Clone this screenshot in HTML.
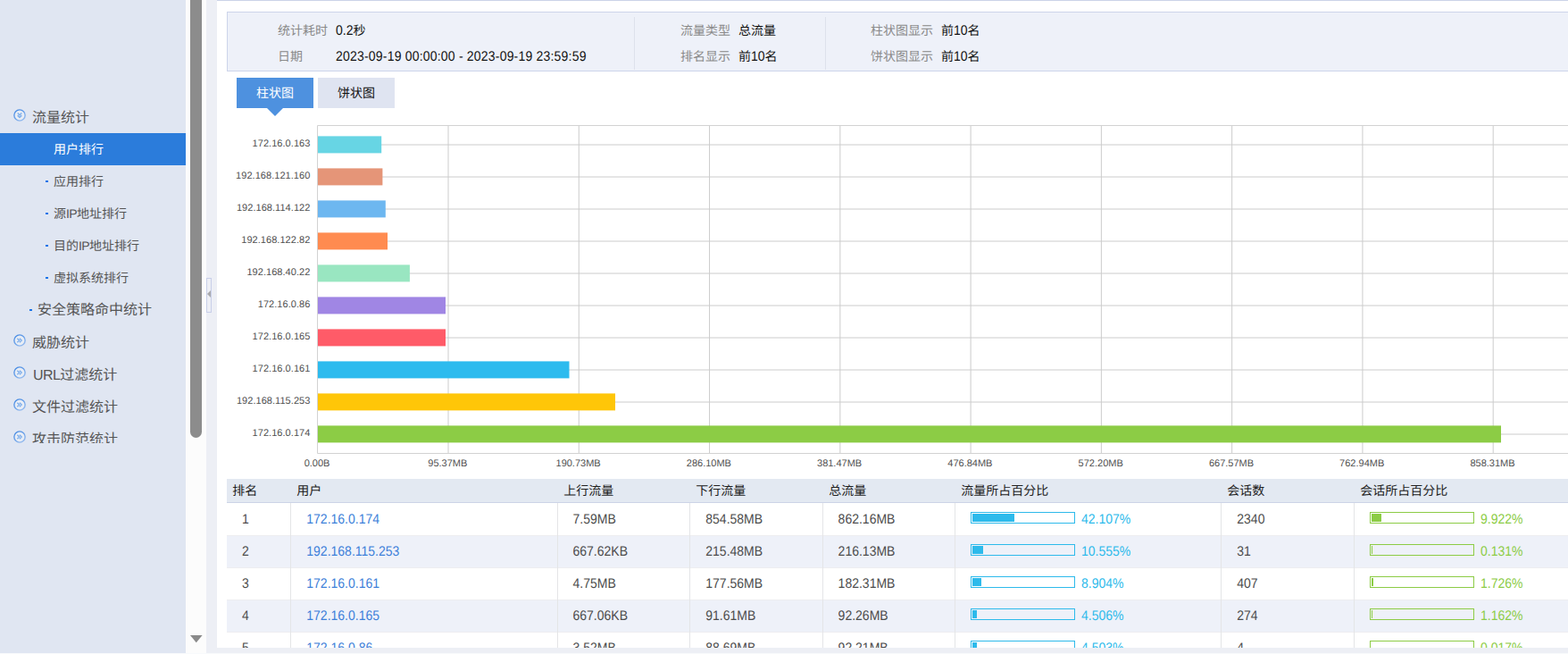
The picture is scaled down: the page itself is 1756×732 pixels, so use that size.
<!DOCTYPE html>
<html lang="zh-CN"><head><meta charset="utf-8"><title>流量统计 - 用户排行</title>
<style>
*{margin:0;padding:0;box-sizing:border-box}
html,body{width:1756px;height:732px;overflow:hidden;background:#fff}
body{position:relative;font-family:"Liberation Sans","Noto Sans CJK SC",sans-serif;font-size:14px;color:#444;text-rendering:geometricPrecision}
i{font-style:normal;display:block}

/* ---------- left menu ---------- */
#side{position:absolute;left:0;top:0;width:208px;height:731px;background:#e0e6f2}
#menu{position:absolute;left:0;top:0;width:208px;height:496px;overflow:hidden}
.mi{position:absolute;left:0;width:208px;height:36px;line-height:36px;color:#555;white-space:nowrap}
.mi .tx{position:absolute;top:1px}
.mi.top .tx{top:1.7px}
.mi.sub .tx{top:.4px}
.mi .l{letter-spacing:-0.6px}
.mi.top .l{margin-left:1px}
.mi.top .tx{left:36px;font-size:16px}
.mi.mid .tx{left:42px;font-size:16px}
.mi.sub .tx{left:60px;font-size:14px}
.mi .ic{position:absolute;left:15px;top:9px;fill:rgba(255,255,255,.28);stroke:url(#rg) #5c9ce8;stroke-width:1.4}
.mi .ic path{fill:none;stroke:#82b1ec;stroke-width:1.5;stroke-linejoin:round}
.mi .bl{position:absolute;top:17px;width:3px;height:2px;background:#1a73e8}
.mi.sub .bl{left:51px}
.mi.mid .bl{left:33px}
.mi.sel{background:#2b7cdb;color:#fff}

/* ---------- menu scrollbar ---------- */
#sb{position:absolute;left:208px;top:0;width:23px;height:731px;background:#fcfcfc;overflow:hidden}
#thumb{position:absolute;left:5px;top:-20px;width:13px;height:510px;border-radius:6.5px;background:#8c8c8c}
#dn{position:absolute;left:5px;top:711px;fill:#8a8a8a}

/* ---------- splitter ---------- */
#gut{position:absolute;left:231px;top:0;width:12px;height:731px;background:#edeff5}
#hd{position:absolute;left:0;top:311px;width:6px;height:39px;border:1px solid #c8cfe9}
#hd svg{position:absolute;left:0;top:13px;fill:#a9a9ad}

/* ---------- main ---------- */
#main{position:absolute;left:243px;top:0;width:1513px;height:725px;background:#fff;overflow:hidden;box-shadow:inset 0 1px 0 #cbd3e8}
#info{position:absolute;left:11px;top:13px;width:1510px;height:67px;background:#eef1f9;box-shadow:inset 1px 1px 0 #cdd4ea,inset 0 -1px 0 #cdd4ea}
#info>span{position:absolute;font-size:14px;line-height:20px;white-space:nowrap}
.il{color:#8a8a8a}
.iv{color:#111}
.date{letter-spacing:.2px}
.iv .l{display:inline-block;line-height:14px;transform:scaleY(1.1);transform-origin:0 83%}
.dv{position:absolute;top:6px;width:1px;height:59px;background:#dde1ec}

.tab{position:absolute;top:87px;width:86px;height:34px;line-height:34px;text-align:center;font-size:14px;white-space:nowrap}
.tab.on{left:22px;background:#4e91df;color:#fff}
.tab.off{left:113px;background:#dfe4f1;color:#111}
.tab.on i{position:absolute;left:34px;top:34px;width:0;height:0;border-left:9px solid transparent;border-right:9px solid transparent;border-top:9px solid #4e91df}

/* ---------- chart ---------- */
#chart{position:absolute;left:-243px;top:0;width:1756px;height:536px}
#grid{position:absolute;left:243px;top:130px}
.yl,.xl{position:absolute;font-size:11px;line-height:14px;color:#505050;white-space:nowrap}
.yl{left:242.4px;width:105px;text-align:right;letter-spacing:.05px}
.xl{top:512px;width:100px;text-align:center}

/* ---------- table ---------- */
#tbl{position:absolute;left:11px;top:536px;width:1502px;height:260px}
.th{position:absolute;left:0;top:0;width:100%;height:27px;background:#e3e9f2;border-bottom:1px solid #ccd4e7}
.hc{position:absolute;top:0;line-height:26px;font-size:14px;color:#222;white-space:nowrap}
.tr{position:absolute;left:0;width:100%;height:36px}
.tr.alt{background:#eef1f9}
.td,.pc{position:absolute;top:0;line-height:36px;font-size:14px;color:#4c4c4c;white-space:nowrap;transform:scaleY(1.1);transform-origin:0 22.6px}
.lk{color:#3d7fd9}
.pbar{position:absolute;top:10px;width:117px;height:13px;border:1px solid;padding:1px}
.pbar i{height:100%}
.pb{border-color:#2dbaeb;color:#2dbaeb}
.pg{border-color:#8ccc45;color:#8ccc45}
.pb i{background:#2dbaeb}
.pg i{background:#8ccc45}
.cd{position:absolute;top:27px;width:1px;height:233px;background:#e4e5e7}
.rl{position:absolute;left:0;width:100%;height:1px;background:#ededf0}

#bot{position:absolute;left:231px;top:725px;width:1525px;height:6px;background:#edeff5}
#bot2{position:absolute;left:0;top:731px;width:1756px;height:1px;background:#f8fafc}

</style></head>
<body>
<svg width="0" height="0" style="position:absolute;left:-10px;top:-10px" aria-hidden="true"><defs>
<linearGradient id="rg" x1="0.15" y1="0" x2="0.85" y2="1"><stop offset="0" stop-color="#4489e3"/><stop offset="1" stop-color="#98bdef"/></linearGradient>
</defs></svg>
<div id="side"><div id="menu">
<div class="mi top" style="top:113px"><svg class="ic" width="14" height="14" viewBox="0 0 14 14"><circle cx="7" cy="7" r="6.15"/><path d="M4.7 4.5L7 6.8L9.3 4.5M4.7 7.1L7 9.4L9.3 7.1"/></svg><span class="tx">流量统计</span></div>
<div class="mi sub sel" style="top:149px"><span class="tx">用户排行</span></div>
<div class="mi sub" style="top:185px"><i class="bl"></i><span class="tx">应用排行</span></div>
<div class="mi sub" style="top:221px"><i class="bl"></i><span class="tx">源<span class="l">IP</span>地址排行</span></div>
<div class="mi sub" style="top:257px"><i class="bl"></i><span class="tx">目的<span class="l">IP</span>地址排行</span></div>
<div class="mi sub" style="top:293px"><i class="bl"></i><span class="tx">虚拟系统排行</span></div>
<div class="mi mid" style="top:329px"><i class="bl"></i><span class="tx">安全策略命中统计</span></div>
<div class="mi top" style="top:365px"><svg class="ic" width="14" height="14" viewBox="0 0 14 14"><circle cx="7" cy="7" r="6.15"/><path d="M4.3 4.7L6.6 7L4.3 9.3M6.9 4.7L9.2 7L6.9 9.3"/></svg><span class="tx">威胁统计</span></div>
<div class="mi top" style="top:401px"><svg class="ic" width="14" height="14" viewBox="0 0 14 14"><circle cx="7" cy="7" r="6.15"/><path d="M4.3 4.7L6.6 7L4.3 9.3M6.9 4.7L9.2 7L6.9 9.3"/></svg><span class="tx"><span class="l">URL</span>过滤统计</span></div>
<div class="mi top" style="top:437px"><svg class="ic" width="14" height="14" viewBox="0 0 14 14"><circle cx="7" cy="7" r="6.15"/><path d="M4.3 4.7L6.6 7L4.3 9.3M6.9 4.7L9.2 7L6.9 9.3"/></svg><span class="tx">文件过滤统计</span></div>
<div class="mi top" style="top:473px"><svg class="ic" width="14" height="14" viewBox="0 0 14 14"><circle cx="7" cy="7" r="6.15"/><path d="M4.3 4.7L6.6 7L4.3 9.3M6.9 4.7L9.2 7L6.9 9.3"/></svg><span class="tx">攻击防范统计</span></div>
</div></div>
<div id="sb"><i id="thumb"></i><svg id="dn" width="14" height="9" viewBox="0 0 14 9"><path d="M0 0H13.6L6.8 8.2Z"/></svg></div>
<div id="gut"><div id="hd"><svg width="4" height="8" viewBox="0 0 4 8"><path d="M4 0V8L0 4Z"/></svg></div></div>
<div id="main">
<div id="info">
<span class="il" style="left:57px;top:11px">统计耗时</span><span class="iv" style="left:122px;top:11px"><span class="l">0.2</span>秒</span>
<span class="il" style="left:57px;top:40px">日期</span><span class="iv date" style="left:122px;top:40px"><span class="l">2023-09-19 00:00:00 - 2023-09-19 23:59:59</span></span>
<span class="il" style="left:508px;top:11px">流量类型</span><span class="iv" style="left:573px;top:11px">总流量</span>
<span class="il" style="left:508px;top:40px">排名显示</span><span class="iv" style="left:573px;top:40px">前<span class="l">10</span>名</span>
<span class="il" style="left:721px;top:11px">柱状图显示</span><span class="iv" style="left:800px;top:11px">前<span class="l">10</span>名</span>
<span class="il" style="left:721px;top:40px">饼状图显示</span><span class="iv" style="left:800px;top:40px">前<span class="l">10</span>名</span>
<i class="dv" style="left:456px"></i><i class="dv" style="left:670px"></i>
</div>
<div id="tabs"><div class="tab on">柱状图<i></i></div><div class="tab off">饼状图</div></div>
<div id="chart">
<svg id="grid" width="1513" height="400" viewBox="243 130 1513 400">
<g stroke="#ccc" stroke-width="1" fill="none">
<path d="M502.00 141V507"/>
<path d="M648.28 141V507"/>
<path d="M794.55 141V507"/>
<path d="M940.83 141V507"/>
<path d="M1087.10 141V507"/>
<path d="M1233.38 141V507"/>
<path d="M1379.65 141V507"/>
<path d="M1525.93 141V507"/>
<path d="M1672.20 141V507"/>
<path d="M356 162H1756"/>
<path d="M356 198H1756"/>
<path d="M356 234H1756"/>
<path d="M356 270H1756"/>
<path d="M356 306H1756"/>
<path d="M356 342H1756"/>
<path d="M356 378H1756"/>
<path d="M356 414H1756"/>
<path d="M356 450H1756"/>
<path d="M356 486H1756"/>
</g>
<rect x="356" y="152.4" width="71.2" height="19" fill="#67d5e4"/>
<rect x="356" y="188.4" width="72.4" height="19" fill="#e59578"/>
<rect x="356" y="224.4" width="75.8" height="19" fill="#6db7f0"/>
<rect x="356" y="260.4" width="78.0" height="19" fill="#ff8b50"/>
<rect x="356" y="296.4" width="102.9" height="19" fill="#99e6c1"/>
<rect x="356" y="332.4" width="143.0" height="19" fill="#a086e4"/>
<rect x="356" y="368.4" width="143.0" height="19" fill="#ff5b68"/>
<rect x="356" y="404.4" width="281.5" height="19" fill="#2dbbee"/>
<rect x="356" y="440.4" width="333.0" height="19" fill="#ffc608"/>
<rect x="356" y="476.4" width="1325.0" height="19" fill="#8ccc45"/>
<path d="M355.5 140.5V507.5H1756M355.5 140.5H1756" stroke="#d2d2d2" stroke-width="1" fill="none"/>
</svg>
<span class="yl" style="top:154px">172.16.0.163</span>
<span class="yl" style="top:190px">192.168.121.160</span>
<span class="yl" style="top:226px">192.168.114.122</span>
<span class="yl" style="top:262px">192.168.122.82</span>
<span class="yl" style="top:298px">192.168.40.22</span>
<span class="yl" style="top:334px">172.16.0.86</span>
<span class="yl" style="top:370px">172.16.0.165</span>
<span class="yl" style="top:406px">172.16.0.161</span>
<span class="yl" style="top:442px">192.168.115.253</span>
<span class="yl" style="top:478px">172.16.0.174</span>
<span class="xl" style="left:305.0px">0.00B</span>
<span class="xl" style="left:451.3px">95.37MB</span>
<span class="xl" style="left:597.6px">190.73MB</span>
<span class="xl" style="left:743.9px">286.10MB</span>
<span class="xl" style="left:890.1px">381.47MB</span>
<span class="xl" style="left:1036.4px">476.84MB</span>
<span class="xl" style="left:1182.7px">572.20MB</span>
<span class="xl" style="left:1329.0px">667.57MB</span>
<span class="xl" style="left:1475.2px">762.94MB</span>
<span class="xl" style="left:1621.5px">858.31MB</span>
</div>
<div id="tbl">
<div class="th">
<span class="hc" style="left:6.3px">排名</span>
<span class="hc" style="left:78.3px">用户</span>
<span class="hc" style="left:377.3px">上行流量</span>
<span class="hc" style="left:525.3px">下行流量</span>
<span class="hc" style="left:674.3px">总流量</span>
<span class="hc" style="left:822.3px">流量所占百分比</span>
<span class="hc" style="left:1120.3px">会话数</span>
<span class="hc" style="left:1269.3px">会话所占百分比</span>
</div>
<div class="tr" style="top:27px">
<span class="td" style="left:17.0px">1</span>
<span class="td lk" style="left:89.3px">172.16.0.174</span>
<span class="td" style="left:387.5px">7.59MB</span>
<span class="td" style="left:536.3px">854.58MB</span>
<span class="td" style="left:684.6px">862.16MB</span>
<span class="pbar pb" style="left:833px"><i style="width:46.7px"></i></span><span class="pc pb" style="left:957px">42.107%</span>
<span class="td" style="left:1131.3px">2340</span>
<span class="pbar pg" style="left:1280px"><i style="width:11.0px"></i></span><span class="pc pg" style="left:1404px">9.922%</span>
</div>
<div class="tr alt" style="top:63px">
<span class="td" style="left:17.0px">2</span>
<span class="td lk" style="left:89.3px">192.168.115.253</span>
<span class="td" style="left:387.5px">667.62KB</span>
<span class="td" style="left:536.3px">215.48MB</span>
<span class="td" style="left:684.6px">216.13MB</span>
<span class="pbar pb" style="left:833px"><i style="width:11.7px"></i></span><span class="pc pb" style="left:957px">10.555%</span>
<span class="td" style="left:1131.3px">31</span>
<span class="pbar pg" style="left:1280px"><i style="width:0.1px"></i></span><span class="pc pg" style="left:1404px">0.131%</span>
</div>
<div class="tr" style="top:99px">
<span class="td" style="left:17.0px">3</span>
<span class="td lk" style="left:89.3px">172.16.0.161</span>
<span class="td" style="left:387.5px">4.75MB</span>
<span class="td" style="left:536.3px">177.56MB</span>
<span class="td" style="left:684.6px">182.31MB</span>
<span class="pbar pb" style="left:833px"><i style="width:9.9px"></i></span><span class="pc pb" style="left:957px">8.904%</span>
<span class="td" style="left:1131.3px">407</span>
<span class="pbar pg" style="left:1280px"><i style="width:1.9px"></i></span><span class="pc pg" style="left:1404px">1.726%</span>
</div>
<div class="tr alt" style="top:135px">
<span class="td" style="left:17.0px">4</span>
<span class="td lk" style="left:89.3px">172.16.0.165</span>
<span class="td" style="left:387.5px">667.06KB</span>
<span class="td" style="left:536.3px">91.61MB</span>
<span class="td" style="left:684.6px">92.26MB</span>
<span class="pbar pb" style="left:833px"><i style="width:5.0px"></i></span><span class="pc pb" style="left:957px">4.506%</span>
<span class="td" style="left:1131.3px">274</span>
<span class="pbar pg" style="left:1280px"><i style="width:1.3px"></i></span><span class="pc pg" style="left:1404px">1.162%</span>
</div>
<div class="tr" style="top:171px">
<span class="td" style="left:17.0px">5</span>
<span class="td lk" style="left:89.3px">172.16.0.86</span>
<span class="td" style="left:387.5px">3.52MB</span>
<span class="td" style="left:536.3px">88.69MB</span>
<span class="td" style="left:684.6px">92.21MB</span>
<span class="pbar pb" style="left:833px"><i style="width:5.0px"></i></span><span class="pc pb" style="left:957px">4.503%</span>
<span class="td" style="left:1131.3px">4</span>
<span class="pbar pg" style="left:1280px"><i style="width:0.0px"></i></span><span class="pc pg" style="left:1404px">0.017%</span>
</div>
<i class="rl" style="top:63px"></i>
<i class="rl" style="top:99px"></i>
<i class="rl" style="top:135px"></i>
<i class="rl" style="top:171px"></i>
<i class="rl" style="top:207px"></i>
<i class="cd" style="left:71px"></i>
<i class="cd" style="left:370px"></i>
<i class="cd" style="left:518px"></i>
<i class="cd" style="left:667px"></i>
<i class="cd" style="left:815px"></i>
<i class="cd" style="left:1113px"></i>
<i class="cd" style="left:1262px"></i>
</div>
</div>
<div id="bot"></div><div id="bot2"></div>
</body></html>
